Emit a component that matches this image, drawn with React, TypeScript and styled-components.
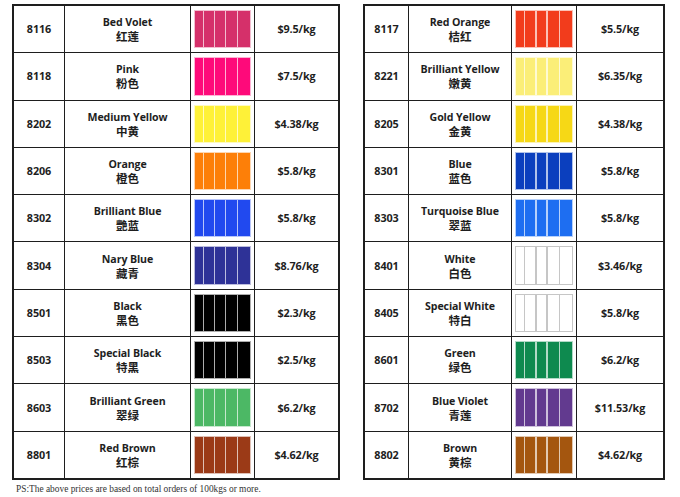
import React from "react";
import styled, { createGlobalStyle } from "styled-components";

interface Dye {
  code: string;
  name: string;
  cn: string;
  price: string;
  color: string;
}

const leftDyes: Dye[] = [
  { code: "8116", name: "Bed Volet", cn: "红莲", price: "$9.5/kg", color: "#d5306a" },
  { code: "8118", name: "Pink", cn: "粉色", price: "$7.5/kg", color: "#fe0a7a" },
  { code: "8202", name: "Medium Yellow", cn: "中黄", price: "$4.38/kg", color: "#fef138" },
  { code: "8206", name: "Orange", cn: "橙色", price: "$5.8/kg", color: "#fd7f08" },
  { code: "8302", name: "Brilliant Blue", cn: "艷蓝", price: "$5.8/kg", color: "#2149ef" },
  { code: "8304", name: "Nary Blue", cn: "藏青", price: "$8.76/kg", color: "#2e3297" },
  { code: "8501", name: "Black", cn: "黑色", price: "$2.3/kg", color: "#000000" },
  { code: "8503", name: "Special Black", cn: "特黑", price: "$2.5/kg", color: "#000000" },
  { code: "8603", name: "Brilliant Green", cn: "翠绿", price: "$6.2/kg", color: "#4cb865" },
  { code: "8801", name: "Red Brown", cn: "红棕", price: "$4.62/kg", color: "#9b3a17" },
];

const rightDyes: Dye[] = [
  { code: "8117", name: "Red Orange", cn: "桔红", price: "$5.5/kg", color: "#f23c1c" },
  { code: "8221", name: "Brilliant Yellow", cn: "嫩黄", price: "$6.35/kg", color: "#fbee78" },
  { code: "8205", name: "Gold Yellow", cn: "金黄", price: "$4.38/kg", color: "#f6d816" },
  { code: "8301", name: "Blue", cn: "蓝色", price: "$5.8/kg", color: "#0b3fbe" },
  { code: "8303", name: "Turquoise Blue", cn: "翠蓝", price: "$5.8/kg", color: "#1e6ef1" },
  { code: "8401", name: "White", cn: "白色", price: "$3.46/kg", color: "#ffffff" },
  { code: "8405", name: "Special White", cn: "特白", price: "$5.8/kg", color: "#ffffff" },
  { code: "8601", name: "Green", cn: "绿色", price: "$6.2/kg", color: "#0e8a4f" },
  { code: "8702", name: "Blue Violet", cn: "青莲", price: "$11.53/kg", color: "#623a8f" },
  { code: "8802", name: "Brown", cn: "黄棕", price: "$4.62/kg", color: "#a4560f" },
];

const stripeWeights = [8, 10, 10, 11, 12];

const GlobalStyle = createGlobalStyle`
  html, body {
    margin: 0;
    background: #ffffff;
  }
  body {
    font-family: "Open Sans", "Noto Sans CJK SC", sans-serif;
    color: #1e1e1e;
  }
`;

const Page = styled.div`
  width: 680px;
  height: 497px;
  padding: 4px 0 0 12px;
  box-sizing: border-box;
  display: flex;
  flex-direction: column;
`;

const Tables = styled.div`
  display: flex;
  gap: 23px;
`;

const Table = styled.div<{ $cols: string }>`
  display: grid;
  grid-template-columns: ${(p) => p.$cols};
  grid-template-rows: repeat(10, 1fr);
  gap: 1px;
  height: 476px;
  box-sizing: border-box;
  border: 2px solid #1e1e1e;
  background: #1e1e1e;
`;

const Cell = styled.div`
  background: #ffffff;
  display: flex;
  flex-direction: column;
  align-items: center;
  justify-content: center;
  font-size: 10.6px;
  font-weight: 700;
  line-height: 14px;
  text-align: center;
  letter-spacing: -0.1px;
`;

const Code = styled(Cell)`
  font-size: 10.8px;
`;

const Price = styled(Cell)`
  font-size: 10.8px;
`;

const Name = styled.span`
  line-height: 14px;
`;

const Cn = styled.span`
  font-family: "Noto Sans CJK SC", sans-serif;
  font-size: 11.5px;
  font-weight: 700;
  line-height: 14px;
  letter-spacing: 0;
`;

const SwatchCell = styled.div`
  background: #ffffff;
  padding: 4px 3px;
  display: flex;
`;

const Swatch = styled.div<{ $color: string; $white: boolean }>`
  flex: 1;
  display: flex;
  gap: 1.5px;
  padding: 1px;
  background: ${(p) => (p.$white ? "#c6c6c6" : `color-mix(in srgb, ${p.$color} 32%, white)`)};
`;

const Stripe = styled.div<{ $color: string; $weight: number }>`
  flex: ${(p) => p.$weight};
  background: ${(p) => p.$color};
`;

const Note = styled.div`
  margin: 4px 0 0 4px;
  font-family: "Liberation Serif", serif;
  font-size: 9.4px;
  color: #333333;
`;

const DyeTable: React.FC<{ dyes: Dye[]; cols: string }> = ({ dyes, cols }) => (
  <Table $cols={cols}>
    {dyes.map((d) => (
      <React.Fragment key={d.code}>
        <Code>{d.code}</Code>
        <Cell>
          <Name>{d.name}</Name>
          <Cn>{d.cn}</Cn>
        </Cell>
        <SwatchCell>
          <Swatch $color={d.color} $white={d.color === "#ffffff"}>
            {stripeWeights.map((w, i) => (
              <Stripe key={i} $color={d.color} $weight={w} />
            ))}
          </Swatch>
        </SwatchCell>
        <Price>{d.price}</Price>
      </React.Fragment>
    ))}
  </Table>
);

export default function App() {
  return (
    <>
      <GlobalStyle />
      <Page>
        <Tables>
          <DyeTable dyes={leftDyes} cols="50px 125px 63px 83px" />
          <DyeTable dyes={rightDyes} cols="43px 102px 64px 86px" />
        </Tables>
        <Note>PS:The above prices are based on total orders of 100kgs or more.</Note>
      </Page>
    </>
  );
}
